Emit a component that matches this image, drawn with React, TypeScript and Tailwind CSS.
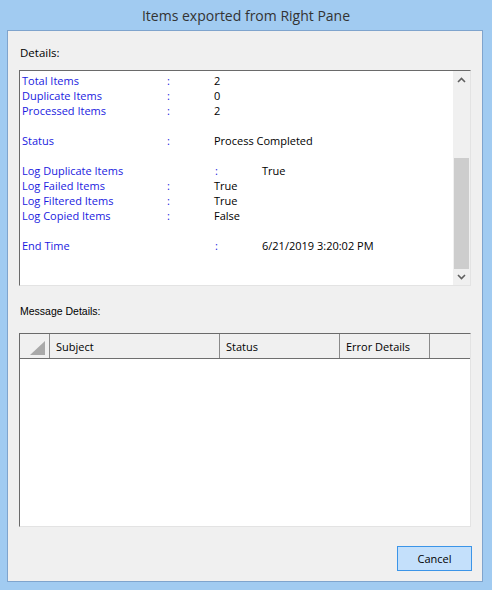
import React from "react";

const ui = { fontFamily: '"Open Sans", "Noto Sans", sans-serif' };
const classic = { fontFamily: '"Liberation Sans", Arial, sans-serif' };

type Row = { label?: string; value?: string; wide?: boolean };

const rows: Row[] = [
  { label: "Total Items", value: "2" },
  { label: "Duplicate Items", value: "0" },
  { label: "Processed Items", value: "2" },
  {},
  { label: "Status", value: "Process Completed" },
  {},
  { label: "Log Duplicate Items", value: "True", wide: true },
  { label: "Log Failed Items", value: "True" },
  { label: "Log Filtered Items", value: "True" },
  { label: "Log Copied Items", value: "False" },
  {},
  { label: "End Time", value: "6/21/2019 3:20:02 PM", wide: true },
];

function Chevron({ up }: { up?: boolean }) {
  return (
    <svg width="9" height="6" viewBox="0 0 9 6">
      <polyline
        points={up ? "1,5 4.5,1.5 8,5" : "1,1 4.5,4.5 8,1"}
        fill="none"
        stroke="#606060"
        strokeWidth="1.6"
      />
    </svg>
  );
}

function DetailRow({ row }: { row: Row }) {
  if (!row.label) return <div className="h-[15px]" />;
  return (
    <div className="flex h-[15px] leading-[15px] whitespace-nowrap">
      <span className={row.wide ? "w-[193px] text-[#1a1ae0]" : "w-[145px] text-[#1a1ae0]"}>
        {row.label}
      </span>
      <span className="w-[47px] text-[#1a1ae0]">:</span>
      <span className="text-black">{row.value}</span>
    </div>
  );
}

export default function App() {
  return (
    <div className="w-[492px] h-[590px] bg-[#a1cbf1] flex flex-col" style={ui}>
      <div className="h-[30px] flex items-center justify-center text-[14px] text-[#333333]">
        Items exported from Right Pane
      </div>

      <div className="ml-[7px] w-[476px] h-[552px] border border-[#7fa4cd] bg-[#f0f0f0] flex flex-col">
        <div className="mt-[14px] ml-[12px] h-[15px] leading-[15px] text-[11.5px] text-black">
          Details:
        </div>

        <div className="mt-[10px] ml-[11px] w-[452px] h-[216px] flex border-t border-l border-[#6a6a6a] border-r border-b border-r-[#e3e3e3] border-b-[#e3e3e3] bg-white">
          <div className="flex-1 pt-[2px] pl-[2px] text-[11px]">
            {rows.map((r, i) => (
              <DetailRow key={i} row={r} />
            ))}
          </div>
          <div className="w-[17px] bg-[#f0f0f0] flex flex-col">
            <div className="h-[17px] flex items-center justify-center">
              <Chevron up />
            </div>
            <div className="mt-[70px] h-[111px] mx-[1px] bg-[#cdcdcd]" />
            <div className="flex-1 flex items-center justify-center">
              <Chevron />
            </div>
          </div>
        </div>

        <div className="mt-[18px] ml-[12px] h-[14px] leading-[14px] text-[10.5px] text-black" style={classic}>
          Message Details:
        </div>

        <div className="mt-[15px] ml-[11px] w-[452px] h-[194px] flex flex-col border-t border-l border-[#6a6a6a] border-r border-b border-r-[#e3e3e3] border-b-[#e3e3e3] bg-white">
          <div className="h-[25px] flex bg-[#f0f0f0] border-b-[1.5px] border-[#6e6e6e] text-[11px] text-black">
            <div className="w-[30px] border-r border-[#8a8a8a] flex items-end justify-end pr-[4px] pb-[3px]">
              <svg width="15" height="14" viewBox="0 0 15 14">
                <polygon points="15,0 15,14 0,14" fill="#a9a9a9" />
              </svg>
            </div>
            <div className="w-[170px] border-r border-[#8a8a8a] pl-[6px] pt-[2px] flex items-center">Subject</div>
            <div className="w-[120px] border-r border-[#8a8a8a] pl-[6px] pt-[2px] flex items-center">Status</div>
            <div className="w-[90px] border-r border-[#8a8a8a] pl-[6px] pt-[2px] flex items-center">Error Details</div>
            <div className="flex-1" />
          </div>
          <div className="flex-1" />
        </div>

        <div className="mt-[19px] flex justify-end pr-[10px]">
          <button className="w-[75px] h-[25px] bg-[#c4e0fb] border border-[#3c95e8] text-[11px] text-black leading-none">
            Cancel
          </button>
        </div>
      </div>
    </div>
  );
}
